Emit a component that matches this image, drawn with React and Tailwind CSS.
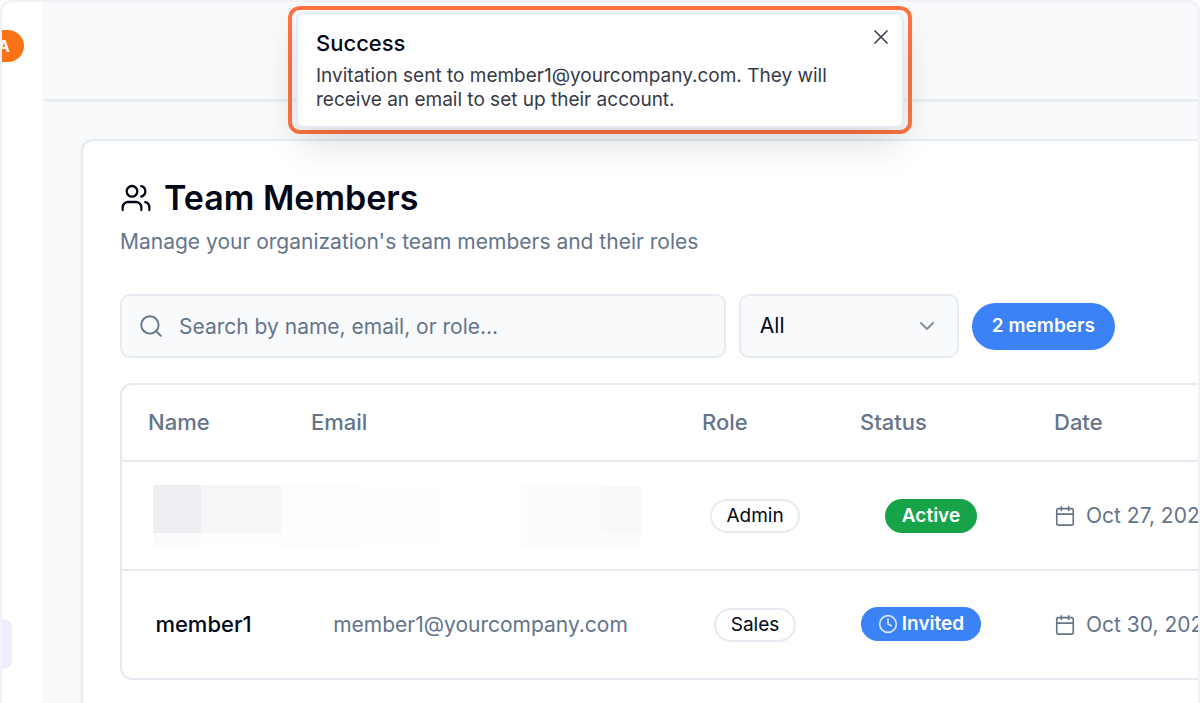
import { Calendar, ChevronDown, Clock, Search, Users, X } from "lucide-react";

function Sidebar() {
  return (
    <aside className="flex w-[41px] shrink-0 flex-col overflow-hidden bg-white pt-7">
      <span className="flex h-8 w-[22px] items-center overflow-hidden rounded-r-full bg-[#f97316] text-base font-bold text-white">
        <span className="-ml-1">A</span>
      </span>
      <span className="mt-[557px] h-[50px] w-[10px] rounded-r-lg bg-[#f1ecfd]" />
    </aside>
  );
}

function Toast() {
  return (
    <div
      role="status"
      className="absolute top-1 left-1/2 w-[624px] max-w-full -translate-x-1/2 rounded-xl border-4 border-[#ff7442] px-1 py-0.5"
    >
      <div className="relative rounded-lg border-2 border-[#e6ebf2] bg-white px-[18px] pt-[15px] pb-[14px] shadow-[0_16px_40px_-4px_rgba(0,0,0,0.16)]">
        <p className="text-[22px] leading-7 font-medium text-[#020817]">Success</p>
        <p className="mt-[7px] w-[540px] max-w-full text-[19px] leading-6 text-[#353a47]">
          Invitation sent to member1@yourcompany.com. They will receive an email to set up their account.
        </p>
        <button type="button" aria-label="Close" className="absolute top-[11px] right-[9px] text-[#414753]">
          <X className="size-6" strokeWidth={1.75} />
        </button>
      </div>
    </div>
  );
}

function DateLine({ children }) {
  return (
    <span className="flex items-center gap-2.5">
      <Calendar className="size-[22px] shrink-0" strokeWidth={1.75} />
      {children}
    </span>
  );
}

function Redacted() {
  return (
    <div aria-hidden="true" className="flex h-[62px]">
      <span className="w-12 border-b-[14px] border-[#fafbfb] bg-[#edeef2]" />
      <span className="w-20 border-b-[14px] border-[#fdfefe] bg-[#f5f6f8]" />
      <span className="w-20 bg-[#fdfdfd]" />
      <span className="w-20 bg-[#fefefe]" />
      <span className="w-20" />
      <span className="w-20 bg-[#fcfcfc]" />
      <span className="w-10 border-b-[14px] border-[#fcfcfc] bg-[#f8f9fb]" />
    </div>
  );
}

const head = "h-[76px] px-[26px] text-left text-[22px] font-medium";
const pill = "inline-flex items-center rounded-full border-2 text-[19px] leading-[30px]";

function MembersTable() {
  return (
    <div className="mt-[25px] overflow-hidden rounded-l-xl border-2 border-r-0 border-[#e6ebf2]">
      <table className="w-full table-fixed text-[21px] whitespace-nowrap text-[#64748b]">
        <colgroup>
          <col className="w-[163px]" />
          <col className="w-[391px]" />
          <col className="w-[158px]" />
          <col className="w-[194px]" />
          <col />
        </colgroup>
        <thead>
          <tr className="border-b-2 border-[#e6ebf2]">
            <th className={head}>Name</th>
            <th className={head}>Email</th>
            <th className={head}>Role</th>
            <th className={head}>Status</th>
            <th className={head}>Date</th>
          </tr>
        </thead>
        <tbody>
          <tr className="h-[109px] border-b-2 border-[#e6ebf2]">
            <td colSpan={2} className="pl-[31px]">
              <Redacted />
            </td>
            <td className="text-center">
              <span className={`${pill} border-[#e6ebf2] px-[14px] text-[#020817]`}>Admin</span>
            </td>
            <td className="text-center">
              <span className={`${pill} border-[#16a34a] bg-[#16a34a] px-[15px] font-semibold text-white`}>
                Active
              </span>
            </td>
            <td className="pl-[26px]">
              <DateLine>Oct 27, 2025</DateLine>
            </td>
          </tr>
          <tr className="h-[108px]">
            <td className="text-center text-[22px] font-medium text-[#020817]">member1</td>
            <td className="text-center">member1@yourcompany.com</td>
            <td className="text-center">
              <span className={`${pill} border-[#e6ebf2] px-[15px] text-[#020817]`}>Sales</span>
            </td>
            <td className="pr-5 text-center">
              <span className={`${pill} gap-1 border-[#3b82f6] bg-[#3b82f6] px-[15px] font-semibold text-white`}>
                <Clock className="size-5 opacity-80" strokeWidth={2} />
                Invited
              </span>
            </td>
            <td className="pl-[26px]">
              <DateLine>Oct 30, 2025</DateLine>
            </td>
          </tr>
        </tbody>
      </table>
    </div>
  );
}

function Filters() {
  return (
    <div className="mt-9 flex items-center gap-[13px] pr-[83px]">
      <div className="relative flex-1">
        <Search className="absolute top-[19px] left-[18px] size-[26px] text-[#64748b]" strokeWidth={1.75} />
        <input
          type="text"
          aria-label="Search members"
          placeholder="Search by name, email, or role..."
          className="h-16 w-full rounded-[10px] border-2 border-[#e6ebf2] bg-[#f8fafc] pr-4 pl-[57px] text-[21px] text-[#020817] placeholder:text-[#64748b]"
        />
      </div>
      <div className="relative w-[220px]">
        <select
          aria-label="Filter by role"
          className="h-16 w-full appearance-none rounded-[10px] border-2 border-[#e6ebf2] bg-[#f8fafc] px-[19px] text-[21px] text-[#020817]"
        >
          <option>All</option>
        </select>
        <ChevronDown className="pointer-events-none absolute top-5 right-5 size-6 text-[#8a8e97]" strokeWidth={2} />
      </div>
      <span className="flex h-[47px] items-center rounded-full bg-[#3b82f6] px-5 text-[19px] font-semibold whitespace-nowrap text-white">
        2 members
      </span>
    </div>
  );
}

export default function App() {
  return (
    <div className="relative flex min-h-screen overflow-hidden rounded-t-xl border-2 border-b-0 border-[#f3f1f6] bg-[#f8fafc] font-['Inter','Liberation_Sans',sans-serif]">
      <Sidebar />
      <div className="flex min-w-0 flex-1 flex-col">
        <header className="h-[99px] border-b-2 border-[#e6ebf2] shadow-xs" />
        <main className="flex flex-1 flex-col pt-[38px] pl-[38px]">
          <section className="flex-1 rounded-tl-xl border-2 border-r-0 border-b-0 border-[#e6ebf2] bg-white pt-[35px] pl-[37px] shadow-xs">
            <h1 className="flex items-center gap-3 text-[34px] leading-[44px] font-semibold text-[#020817]">
              <Users className="size-8" strokeWidth={1.75} />
              Team Members
            </h1>
            <p className="mt-1.5 text-[21px] leading-8 text-[#64748b]">
              Manage your organization's team members and their roles
            </p>
            <Filters />
            <MembersTable />
          </section>
        </main>
      </div>
      <Toast />
    </div>
  );
}
